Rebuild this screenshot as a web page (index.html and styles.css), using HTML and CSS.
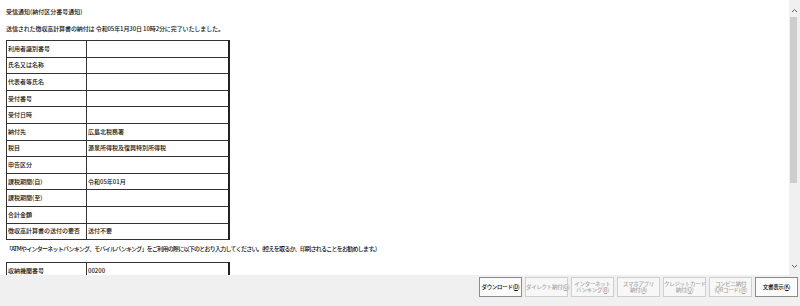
FILE: index.html
```html
<!DOCTYPE html>
<html lang="ja">

<head>
    <meta charset="UTF-8">
    <meta name="viewport" content="width=device-width, initial-scale=1.0">
    <title>受信通知</title>
    <link rel="stylesheet" href="styles.css">
</head>

<body>
    <div class="window">
        <div class="main">
            <div class="content">
                <p class="title">受信通知(納付区分番号通知)</p>
                <p class="lead">送信された徴収高計算書の納付は 令和05年1月30日 10時2分に完了いたしました。</p>

                <table class="info">
                    <tr><td class="label">利用者識別番号</td><td></td></tr>
                    <tr><td class="label">氏名又は名称</td><td></td></tr>
                    <tr><td class="label">代表者等氏名</td><td></td></tr>
                    <tr><td class="label">受付番号</td><td></td></tr>
                    <tr><td class="label">受付日時</td><td></td></tr>
                    <tr><td class="label">納付先</td><td>広島北税務署</td></tr>
                    <tr><td class="label">税目</td><td>源泉所得税及復興特別所得税</td></tr>
                    <tr><td class="label">申告区分</td><td></td></tr>
                    <tr><td class="label">課税期間(自)</td><td>令和05年01月</td></tr>
                    <tr><td class="label">課税期間(至)</td><td></td></tr>
                    <tr><td class="label">合計金額</td><td></td></tr>
                    <tr><td class="label">徴収高計算書の送付の要否</td><td>送付不要</td></tr>
                </table>

                <p class="note">「ATMやインターネットバンキング、モバイルバンキング」をご利用の際に以下のとおり入力してください。(控えを取るか、印刷されることをお勧めします。)</p>

                <table class="info">
                    <tr><td class="label">収納機関番号</td><td>00200</td></tr>
                    <tr><td class="label"></td><td></td></tr>
                </table>
            </div>

            <!-- fake scrollbar -->
            <div class="scrollbar">
                <svg class="arrow" width="7" height="5" viewBox="0 0 7 5"><polyline points="1,4 3.5,1.5 6,4" fill="none" stroke="#606060" stroke-width="1"/></svg>
                <div class="track"><div class="thumb"></div></div>
                <svg class="arrow" width="7" height="5" viewBox="0 0 7 5"><polyline points="1,1 3.5,3.5 6,1" fill="none" stroke="#606060" stroke-width="1"/></svg>
            </div>
        </div>

        <div class="footer">
            <button class="btn">ダウンロード(<u>D</u>)</button>
            <button class="btn" disabled>ダイレクト納付(<u>G</u>)</button>
            <button class="btn" disabled>インターネット<br>バンキング(<u>B</u>)</button>
            <button class="btn" disabled>スマホアプリ<br>納付(<u>A</u>)</button>
            <button class="btn" disabled>クレジットカード<br>納付(<u>Q</u>)</button>
            <button class="btn" disabled>コンビニ納付<br>(QRコード)(<u>R</u>)</button>
            <button class="btn">文書表示(<u>K</u>)</button>
        </div>
    </div>
</body>

</html>
```

FILE: styles.css
```css
body {
    margin: 0;
    padding: 0;
    font-family: "Noto Sans CJK JP", "Liberation Sans", sans-serif;
    color: #111;
    background: #fff;
}

.window {
    width: 800px;
    height: 306px;
    display: flex;
    flex-direction: column;
}

.main {
    height: 275px;
    display: flex;
}

.content {
    flex: 1;
    overflow: hidden;
    padding-left: 6px;
    font-size: 6px;
    font-weight: 500;
}

.title {
    margin: 7px 0 0;
    line-height: 10px;
}

.lead {
    margin: 7px 0 0;
    line-height: 10px;
    letter-spacing: -0.1px;
}

.note {
    margin: 4px 0 0;
    line-height: 10px;
    letter-spacing: -0.75px;
    white-space: nowrap;
}

.info {
    margin-top: 6px;
    width: 224px;
    border-collapse: collapse;
    border: 1px solid #222;
    border-right-width: 2px;
}

.note + .info {
    margin-top: 8px;
}

.info td {
    border: 1px solid #333;
    height: 15.6px;
    padding: 0 1px;
    line-height: 8px;
    white-space: nowrap;
}

.info td.label {
    width: 77px;
}

.scrollbar {
    width: 11px;
    background: #f0f0f0;
    display: flex;
    flex-direction: column;
    align-items: center;
}

.arrow {
    margin: 8px 0 4px;
    flex: none;
}

.scrollbar .arrow:last-child {
    margin: 4px 0 6px;
}

.track {
    flex: 1;
    width: 100%;
}

.thumb {
    width: 7px;
    height: 166px;
    margin: 0 0 0 1px;
    background: #cdcdcd;
}

.footer {
    flex: 1;
    background: #f0f0f0;
    display: flex;
    justify-content: flex-end;
    align-items: flex-start;
    gap: 3px;
    padding: 2px 2px 0 0;
}

.btn {
    width: 43px;
    height: 20px;
    padding: 0;
    font-family: "Noto Sans CJK JP", sans-serif;
    font-size: 5.5px;
    font-weight: 500;
    line-height: 6.5px;
    letter-spacing: -0.3px;
    white-space: nowrap;
    color: #111;
    background: #fbfbfb;
    border: 1px solid #8a8a8a;
    border-radius: 0;
}

.btn:disabled {
    color: #a8a8a8;
    border-color: #cfcfcf;
    background: #f7f7f7;
}

.btn u {
    text-decoration: underline;
}
```
